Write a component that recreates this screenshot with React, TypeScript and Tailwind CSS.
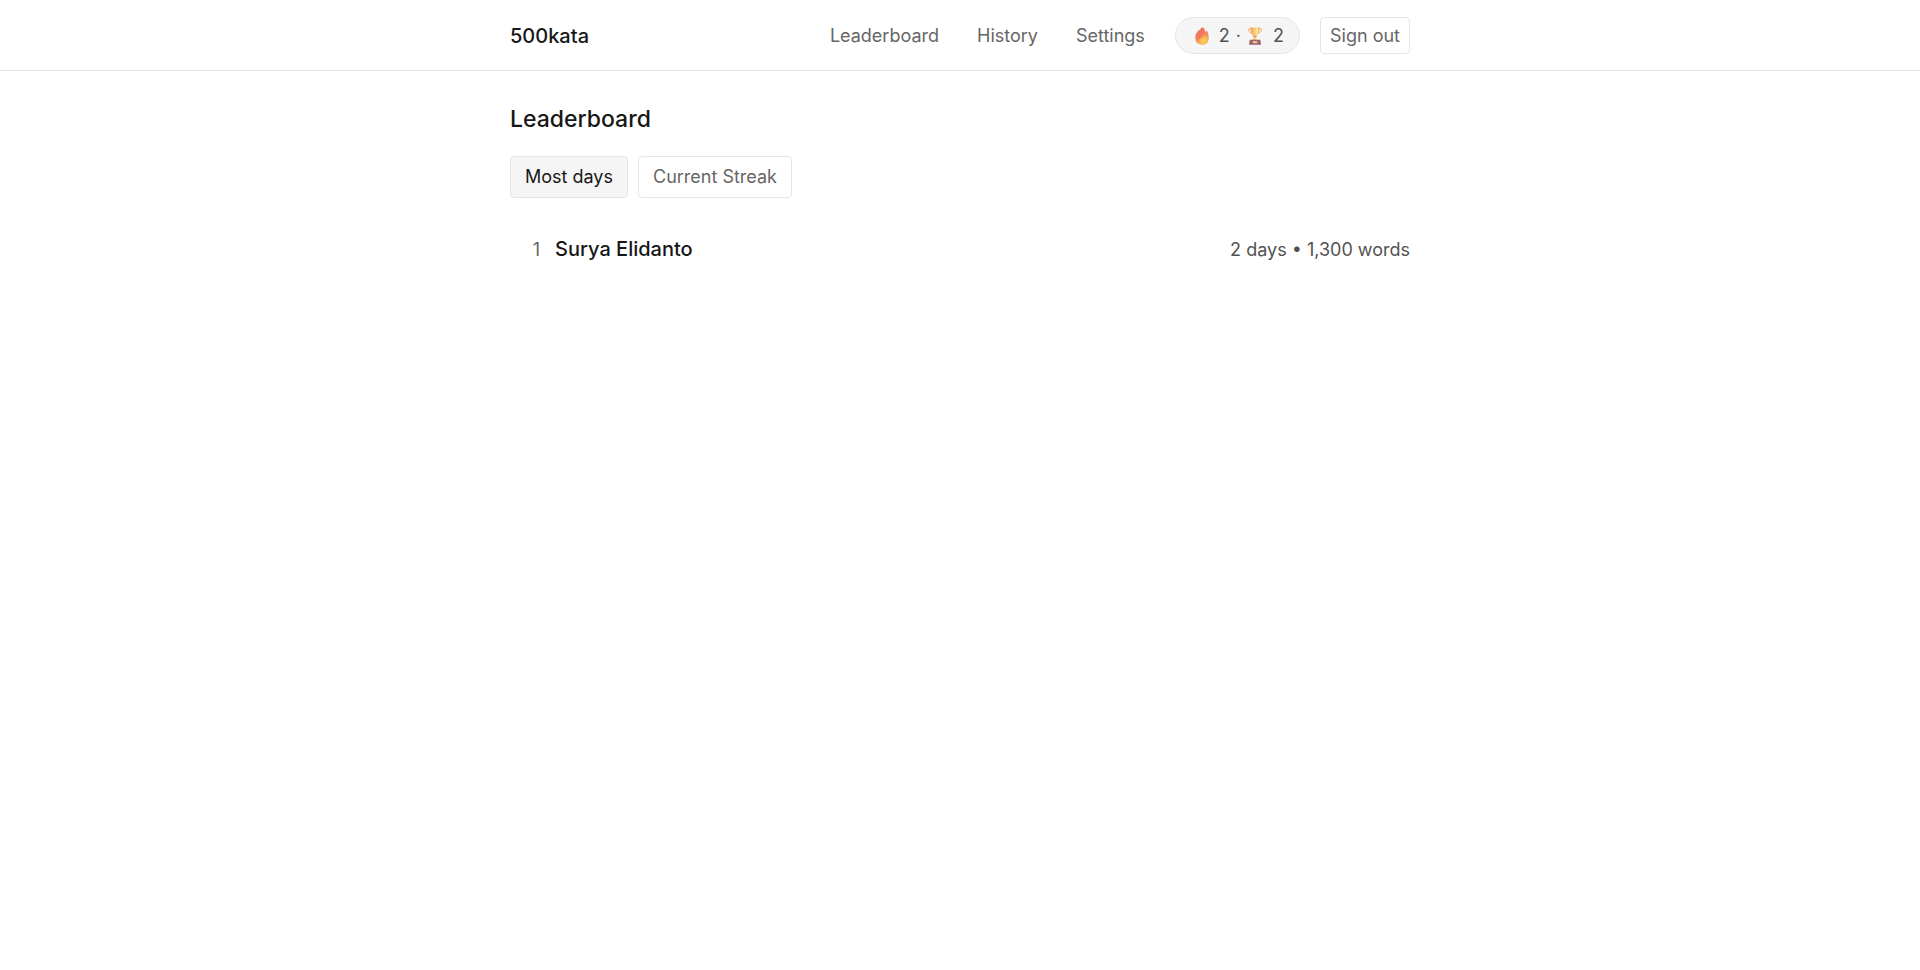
import { useState } from "react";

const links = ["Leaderboard", "History", "Settings"];
const tabs = ["Most days", "Current Streak"];
const entries = [{ rank: 1, name: "Surya Elidanto", stats: "2 days • 1,300 words" }];

function Flame() {
  return (
    <svg viewBox="0 0 14 18" className="h-[18px] w-3.5" role="img" aria-label="Current streak">
      <defs>
        <linearGradient id="flame" x1="0" y1="0" x2="0.35" y2="1">
          <stop offset="0" stopColor="#ec6a66" />
          <stop offset="0.5" stopColor="#f3805c" />
          <stop offset="1" stopColor="#f6a35c" />
        </linearGradient>
        <radialGradient id="ember" cx="0.6" cy="0.75" r="0.65">
          <stop offset="0" stopColor="#fbd057" />
          <stop offset="0.55" stopColor="#f9b558" />
          <stop offset="1" stopColor="#f58a5c" stopOpacity="0" />
        </radialGradient>
      </defs>
      <path fill="url(#flame)" d="M7.300.4C9 .6 9.500 2.100 10.100 3.700l.5 1.500 1-1.600C12.900 5 13.700 7.500 13.700 11c0 4.300-2.300 6.600-6.500 6.600S.3 15.300.3 11.100C.3 9 .9 7 1.700 5.300l.4 1.200C2.400 4.800 3.100 3.600 4 2.600l.5 1.300C5 2.300 5.900.900 7.300.400Z" />
      <path fill="url(#ember)" d="M9.800 4.800c2 2.600 3.600 4.800 3.300 7.700-.3 3.200-2.500 4.900-5.800 4.900-3 0-5.100-1.500-5.400-4.100.8.500 1.600.300 2.200-.300C6 11.500 8.500 9.500 9.800 4.800Z" />
      <path stroke="#e96868" strokeWidth=".8" fill="none" opacity=".65" d="M4.300 4.500C2.700 7 2.200 9 2.500 12M7.200 2.500C4.900 6 4 8.500 4.400 12M8.800 5C6.800 7.500 6 9 6.200 11.500" />
    </svg>
  );
}

function Trophy() {
  return (
    <svg viewBox="0 0 14 18" className="mx-px h-[18px] w-3.5" role="img" aria-label="Longest streak">
      <defs>
        <linearGradient id="cup" x1="0" y1="0" x2="1" y2="0">
          <stop offset="0" stopColor="#ed9d63" />
          <stop offset="0.4" stopColor="#f7c568" />
          <stop offset="0.7" stopColor="#fae08e" />
          <stop offset="1" stopColor="#efae5f" />
        </linearGradient>
        <linearGradient id="base" x1="0" y1="0" x2="1" y2="1">
          <stop offset="0" stopColor="#a9686b" />
          <stop offset="1" stopColor="#8d5d84" />
        </linearGradient>
      </defs>
      <path fill="none" stroke="#eeb060" strokeWidth="1" d="M3 1.700H1.300Q.4 1.700.6 2.900C.8 5.200 2.200 5.900 4.200 6M11 1.700h1.700q.9 0 .7 1.200c-.2 2.300-1.600 3-3.600 3.100" />
      <path fill="url(#cup)" d="M2.400.5h9.200c0 4.500-.7 7.200-3.200 8.200v1.500c0 1.400.6 2.400 1.800 3.200H3.800c1.200-.8 1.800-1.800 1.800-3.200V8.700C3.100 7.700 2.400 5 2.400.5Z" />
      <path fill="#ffeaa8" d="M8.300 1.700h1.700c0 2.400-.4 4-1.700 5Z" />
      <path fill="#dc8964" d="M5.300 8.800h3.400v1.200H5.300Z" />
      <path fill="url(#base)" d="M1.700 12.700h10.600l.7 5H1Z" />
      <path fill="#f6d27c" d="M4.800 14.200h4.400v2H4.800Z" />
    </svg>
  );
}

export default function App() {
  const [tab, setTab] = useState(0);
  return (
    <div className="min-h-screen bg-white font-['Inter',sans-serif] text-lg text-[#171717]">
      <header className="border-b border-[#e5e5e5]">
        <div className="mx-auto flex max-w-[940px] items-center justify-between px-5 pt-[17px] pb-4">
          <a href="#home" className="text-xl leading-6 font-medium">500kata</a>
          <div className="flex items-center gap-5">
            <nav className="mr-2.5 flex gap-[38px] leading-[26px] text-[#666]">
              {links.map((link) => (
                <a key={link} href={"#" + link.toLowerCase()}>{link}</a>
              ))}
            </nav>
            <div className="flex h-[37px] items-center rounded-full border border-[#e5e5e5] bg-[#f5f5f5] px-[15px] leading-[26px] text-[#525252]">
              <span className="flex items-center gap-2.5 pl-1"><Flame />2</span>
              <span className="px-1.5">·</span>
              <span className="flex items-center gap-2.5"><Trophy />2</span>
            </div>
            <button type="button" className="h-[37px] rounded border border-[#e5e5e5] px-[9px] leading-[26px] text-[#666]">Sign out</button>
          </div>
        </div>
      </header>
      <main className="mx-auto max-w-[940px] px-5 pt-8">
        <h1 className="text-[23px] leading-8 font-medium">Leaderboard</h1>
        <div className="mt-[21px] flex gap-2.5">
          {tabs.map((label, i) => (
            <button
              key={label}
              type="button"
              aria-pressed={tab === i}
              onClick={() => setTab(i)}
              className={`h-[42px] rounded border border-[#e5e5e5] px-3.5 ${tab === i ? "bg-[#f5f5f5]" : "text-[#666]"}`}
            >
              {label}
            </button>
          ))}
        </div>
        <ol className="mt-[33px]">
          {entries.map((entry) => (
            <li key={entry.rank} className="flex items-center justify-between py-1">
              <div className="flex items-baseline gap-[15px]">
                <span className="w-[30px] text-right text-[#666]">{entry.rank}</span>
                <span className="text-xl font-medium">{entry.name}</span>
              </div>
              <span className="text-[#525252]">{entry.stats}</span>
            </li>
          ))}
        </ol>
      </main>
    </div>
  );
}
